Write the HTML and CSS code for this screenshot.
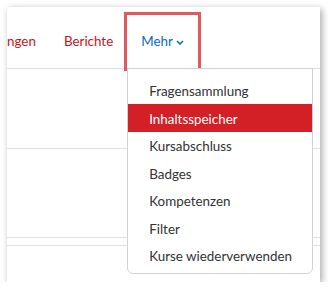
FILE: index.html
```html
<!DOCTYPE html>
<html lang="de">
<head>
<meta charset="utf-8">
<link rel="stylesheet" href="styles.css">
</head>
<body>
<div class="panel">
  <nav class="nav">
    <a class="nav-link first">ngen</a>
    <a class="nav-link">Berichte</a>
    <div class="more">
      <a class="nav-link nav-more">Mehr <svg class="chev" width="8" height="5" viewBox="0 0 8 5"><path d="M1 1l3 3 3-3" fill="none" stroke="#0f6cbf" stroke-width="1.6"/></svg></a>
      <ul class="menu">
        <li class="item">Fragensammlung</li>
        <li class="item active">Inhaltsspeicher</li>
        <li class="item">Kursabschluss</li>
        <li class="item">Badges</li>
        <li class="item">Kompetenzen</li>
        <li class="item">Filter</li>
        <li class="item">Kurse wiederverwenden</li>
      </ul>
    </div>
  </nav>
  <div class="block b1"></div>
  <div class="block b2"></div>
  <div class="block b3"></div>
</div>
</body>
</html>
```
FILE: styles.css
```css
html, body { margin: 0; padding: 0; background: #fff; }
body { font-family: Lato, "Open Sans", sans-serif; font-size: 13.4px; }
.panel {
  margin: 7px 0 0 7px;
  width: 313px;
  height: 275px;
  background: #fff;
  box-shadow: 2px 2px 7px rgba(0,0,0,0.35);
  position: relative;
  overflow: hidden;
}
.nav {
  display: flex;
  align-items: flex-end;
  border-bottom: 1px solid #dee2e6;
  box-sizing: border-box;
  height: 62px;
  padding-top: 8px;
}
.nav-link {
  display: flex;
  align-items: center;
  color: #c4161c;
  height: 53px;
  padding: 1px 14px 0;
  box-sizing: border-box;
  line-height: 1;
}
.nav-link.first { padding-left: 0; }
.more { position: relative; }
.nav-more {
  color: #0f6cbf;
  outline: 3px solid #df5a5e;
  gap: 3px;
  width: 71px;
  padding: 1px 0 0 14px;
}
.chev { margin-top: 1px; }
.menu {
  position: absolute;
  z-index: 2;
  left: 0;
  top: 53px;
  width: 186px;
  margin: 0;
  padding: 7.5px 0 4px;
  list-style: none;
  background: #fff;
  border: 1px solid #cfd2d6;
  border-radius: 0 0 6px 6px;
  box-sizing: border-box;
}
.item {
  height: 27.5px;
  line-height: 26px;
  padding: 1.5px 0 0 21px;
  box-sizing: border-box;
  color: #333;
  white-space: nowrap;
}
.item.active { background: #d32027; color: #fff; }
.block { border-bottom: 1px solid #dee2e6; }
.b1 { height: 79px; }
.b2 { height: 88px; }
.b3 { height: 7px; }
```
